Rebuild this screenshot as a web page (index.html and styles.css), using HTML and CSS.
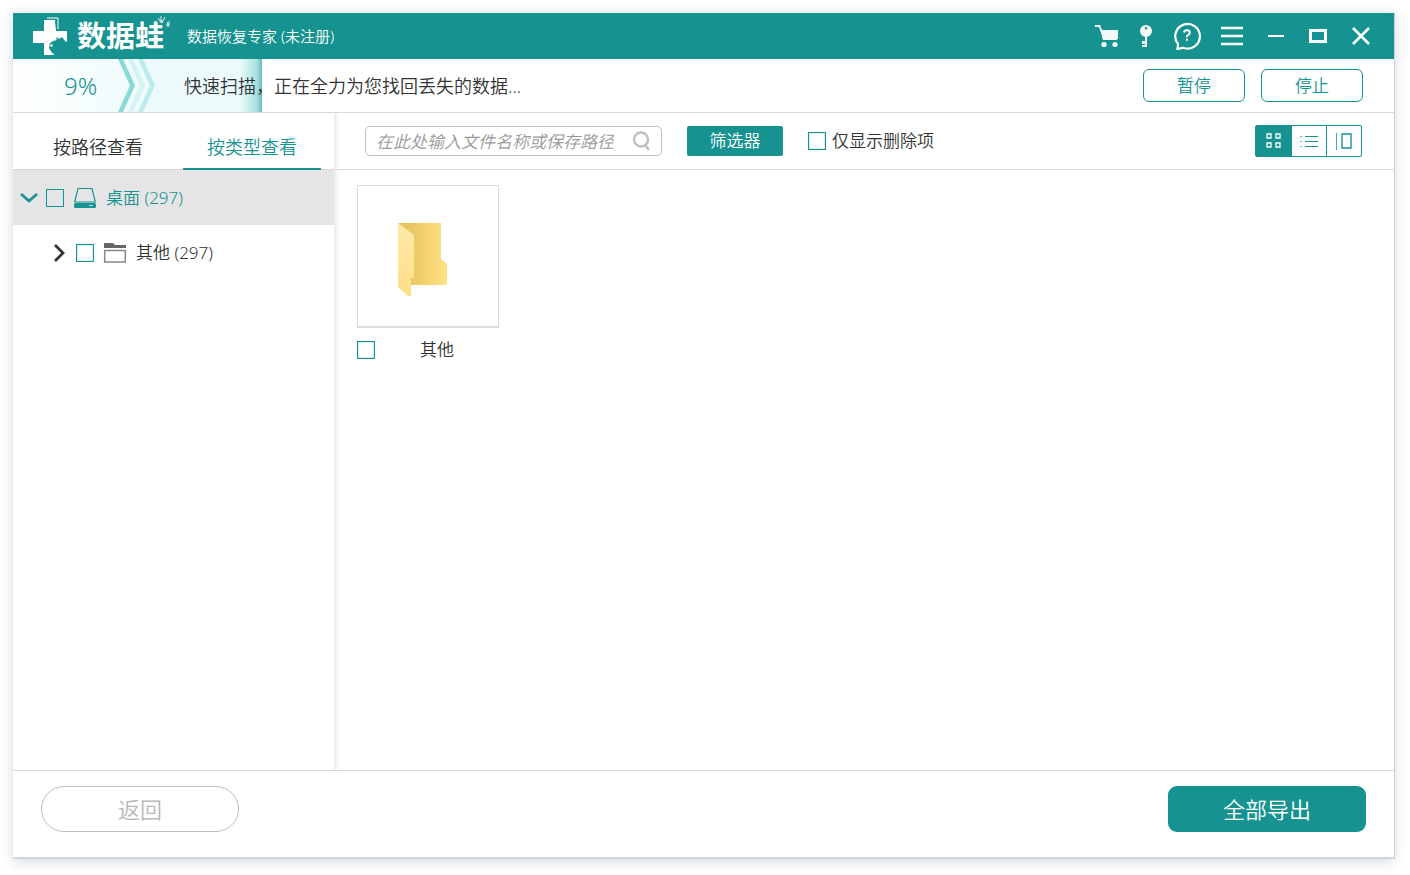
FILE: index.html
```html
<!DOCTYPE html>
<html lang="zh-CN">
<head>
    <meta charset="UTF-8">
    <title>数据恢复专家</title>
    <link rel="stylesheet" href="styles.css">
</head>
<body>
    <div class="window">
        <!-- title bar -->
        <header class="titlebar">
            <svg class="logo-mark" width="36" height="38" viewBox="0 0 36 38">
                <path d="M14 1h11v11" fill="none" stroke="#fff" stroke-width="1"/>
                <path d="M13 3h9v2l1 8v1h11v11l-2-1-3-4-3 2-2-2-2 3-5 3-1 5 3 5 2 1v1H11V26H0V14h11V3z" fill="#fff"/>
                <path d="M17 28l2-1 1 2-2 1zM21 23l2-2 1 1-2 2z" fill="#fff"/>
            </svg>
            <span class="logo-text">数据蛙
                <svg class="logo-paw" width="14" height="13" viewBox="0 0 14 13" fill="#b9dfde">
                    <path d="M1 3l2 3M4 1v5M8 2L6 6M10 7l1 2M12 6v3" fill="none" stroke="#b9dfde" stroke-width="1.200"/>
                    <circle cx="4.500" cy="6.500" r="1.800"/><circle cx="11" cy="10" r="1.800"/>
                </svg>
            </span>
            <span class="app-name">数据恢复专家 (未注册)</span>
            <div class="title-tools">
                <button type="button" aria-label="购买">
                    <svg width="24" height="24" viewBox="0 0 24 24" fill="#f4f8f8">
                        <path d="M0 1h5l2 5h16v9H8L4 3H0z"/>
                        <path d="M7 13h15v3H8z"/>
                        <circle cx="9" cy="20.500" r="2.600"/><circle cx="20" cy="20.500" r="2.600"/>
                    </svg>
                </button>
                <button type="button" aria-label="注册">
                    <svg width="14" height="24" viewBox="0 0 14 24" fill="#f4f8f8">
                        <path fill-rule="evenodd" d="M7 1a6 6 0 1 1 0 12A6 6 0 0 1 7 1zm0 2a1.300 1.300 0 1 0 0 2.600A1.300 1.300 0 0 0 7 3z"/>
                        <path d="M6 12h2v11H3v-2h3v-1H3v-3h3z"/>
                    </svg>
                </button>
                <button type="button" aria-label="帮助">
                    <svg width="28" height="28" viewBox="0 0 28 28" fill="none" stroke="#fff">
                        <path d="M5 22A12.300 12.300 0 1 1 10 25.700L4.500 27z" stroke-width="2.200"/>
                        <path d="M11 10.500q.3-2.200 3-2.200 2.800 0 2.800 2.300 0 1.600-1.600 2.300-1.400.7-1.400 2.300" stroke-width="2"/>
                        <path d="M13 16.800h2v2h-2z" fill="#fff" stroke="none"/>
                    </svg>
                </button>
            </div>
            <div class="window-tools">
                <button type="button" aria-label="菜单">
                    <svg width="22" height="20" viewBox="0 0 22 20" stroke="#fff" stroke-width="2.400"><path d="M0 2h22M0 10h22M0 18h22"/></svg>
                </button>
                <button type="button" aria-label="最小化">
                    <svg width="16" height="20" viewBox="0 0 16 20" stroke="#fff" stroke-width="2"><path d="M0 10h16"/></svg>
                </button>
                <button type="button" aria-label="最大化">
                    <svg width="18" height="14" viewBox="0 0 18 14" fill="none" stroke="#fff" stroke-width="3"><path d="M1.500 1.500h15v11h-15z"/></svg>
                </button>
                <button type="button" aria-label="关闭">
                    <svg width="18" height="18" viewBox="0 0 18 18" stroke="#fff" stroke-width="2.600"><path d="M1 1l16 16M17 1L1 17"/></svg>
                </button>
            </div>
        </header>

        <!-- scan progress -->
        <section class="progress">
            <div class="progress-fill" style="width: 18%"></div>
            <span class="percent">9%</span>
            <svg class="chevrons" width="38" height="53" viewBox="0 0 38 53">
                <path d="M0 0h5l12 26.500L5 53H0l12-26.500z" fill="#8adad8"/>
                <path d="M10 0h5l12 26.500L15 53h-5l12-26.500z" fill="#d4f3f3"/>
                <path d="M20 0h5l12 26.500L25 53h-5l12-26.500z" fill="#bcebeb"/>
            </svg>
            <span class="status">快速扫描，正在全力为您找回丢失的数据...</span>
            <button type="button" class="outline-btn">暂停</button>
            <button type="button" class="outline-btn">停止</button>
        </section>

        <div class="content">
            <aside class="sidebar">
                <nav class="tabs">
                    <button type="button" class="tab">按路径查看</button>
                    <button type="button" class="tab active">按类型查看</button>
                </nav>
                <div class="tree-row selected">
                    <svg class="arrow" width="18" height="18" viewBox="0 0 18 18" fill="none" stroke="#169390" stroke-width="2.800"><path d="M1 5l8 7 8-7"/></svg>
                    <input type="checkbox" id="desktop">
                    <svg class="tree-icon" width="24" height="22" viewBox="0 0 24 22">
                        <path d="M5 1.500h14L22.300 15H1.700z" fill="none" stroke="#169390" stroke-width="1.200"/>
                        <rect x="1" y="16" width="22" height="5" rx="1.500" fill="#169390"/>
                        <path d="M16 18.500h4" stroke="#cfe8e7" stroke-width="1"/>
                    </svg>
                    <label for="desktop">桌面 (297)</label>
                </div>
                <div class="tree-row child">
                    <svg class="arrow" width="18" height="18" viewBox="0 0 18 18" fill="none" stroke="#333" stroke-width="2.800"><path d="M5 1l8 8-8 8"/></svg>
                    <input type="checkbox" id="other">
                    <svg class="tree-icon" width="24" height="22" viewBox="0 0 24 22">
                        <path d="M1 1h9l2 2h11v3H1z" fill="#666"/>
                        <path d="M1.700 8.500h20.600v11.500H1.700z" fill="none" stroke="#888" stroke-width="1.500"/>
                    </svg>
                    <label for="other">其他 (297)</label>
                </div>
            </aside>

            <main class="main">
                <div class="toolbar">
                    <div class="search">
                        <input type="text" placeholder="在此处输入文件名称或保存路径" aria-label="搜索">
                        <svg width="20" height="20" viewBox="0 0 20 20" fill="none" stroke="#c0c0c0" stroke-width="2.500"><circle cx="9" cy="8.500" r="7"/><path d="M13 14l4 5"/></svg>
                    </div>
                    <button type="button" class="filter-btn">筛选器</button>
                    <input type="checkbox" id="deleted">
                    <label class="deleted-label" for="deleted">仅显示删除项</label>
                    <div class="views">
                        <button type="button" class="view active" aria-label="图标">
                            <svg width="16" height="16" viewBox="0 0 16 16" fill="none" stroke="#fff" stroke-width="1.300"><path d="M1 1h4v4H1zM10 1h4v4h-4zM1 10h4v4H1zM10 10h4v4h-4z"/></svg>
                        </button>
                        <button type="button" class="view" aria-label="列表">
                            <svg width="18" height="14" viewBox="0 0 18 14" stroke="#169390"><path d="M5 2.500h13M5 7.500h13M5 12.500h13"/><path d="M0 2.500h2M0 7.500h2M0 12.500h2" stroke-opacity=".6"/></svg>
                        </button>
                        <button type="button" class="view" aria-label="预览">
                            <svg width="18" height="18" viewBox="0 0 18 18" fill="none" stroke="#169390"><path d="M1.500 1v17" stroke-opacity=".8"/><path d="M7 2h9v14H7z" stroke-width="1.400"/></svg>
                        </button>
                    </div>
                </div>

                <div class="files">
                    <div class="file">
                        <div class="thumb">
                            <svg width="52" height="76" viewBox="0 0 52 76">
                                <defs>
                                    <linearGradient id="back" x1="0" y1="0" x2="1" y2="0">
                                        <stop offset=".2" stop-color="#e9c562"/>
                                        <stop offset=".6" stop-color="#f4d372"/>
                                        <stop offset="1" stop-color="#ffe184"/>
                                    </linearGradient>
                                    <linearGradient id="front" x1="0" y1="0" x2="0" y2="1">
                                        <stop offset="0" stop-color="#ffeaab"/>
                                        <stop offset="1" stop-color="#ffdf86"/>
                                    </linearGradient>
                                </defs>
                                <path d="M0 1h43v36l6 5v21H12z" fill="url(#back)"/>
                                <path d="M0 1l16 12v43h-3v18h-3L0 65z" fill="url(#front)"/>
                            </svg>
                        </div>
                        <div class="caption">
                            <input type="checkbox" id="file-other">
                            <label for="file-other">其他</label>
                        </div>
                    </div>
                </div>
            </main>
        </div>

        <footer class="footer">
            <button type="button" class="back-btn">返回</button>
            <button type="button" class="export-btn">全部导出</button>
        </footer>
    </div>
</body>
</html>
```
FILE: styles.css
```css
* {
    box-sizing: border-box;
}
body {
    margin: 0;
    padding: 13px 16px 16px 13px;
    height: 100vh;
    background-color: #fff;
    color: #333;
    font-family: "Noto Sans", "Noto Sans CJK SC", sans-serif;
    font-size: 17px;
    font-weight: 350;
    line-height: 24px;
}
button,
input {
    font: inherit;
    color: inherit;
}
button {
    padding: 0;
    border: 0;
    background: none;
    cursor: pointer;
}
svg {
    display: block;
    flex-shrink: 0;
}
input[type="checkbox"] {
    appearance: none;
    flex-shrink: 0;
    width: 18px;
    height: 18px;
    margin: 0;
    border: 1px solid #169390;
    box-shadow: inset 0 0 0 1px #d5eeed;
}
input[type="checkbox"]:checked {
    background-color: #169390;
}
.window {
    display: flex;
    flex-direction: column;
    height: 100%;
    border-bottom: 2px solid #d0d7de;
    box-shadow: 1px 0 0 #c9ced8, 0 2px 12px rgba(60, 75, 105, 0.22);
}

/* title bar */
.titlebar {
    display: flex;
    align-items: center;
    flex-shrink: 0;
    height: 46px;
    padding: 0 24px 0 20px;
    background-color: #169390;
    color: #fff;
}
.logo-text {
    position: relative;
    margin-left: 8px;
    width: 96px;
    font-size: 29px;
    font-weight: 700;
    line-height: 46px;
    white-space: nowrap;
}
.logo-paw {
    position: absolute;
    top: 2px;
    right: 2px;
}
.app-name {
    margin-left: 14px;
    font-size: 15px;
    white-space: nowrap;
}
.title-tools,
.window-tools {
    display: flex;
    align-items: center;
}
.title-tools {
    gap: 20px;
    margin-left: auto;
}
.window-tools {
    gap: 25px;
    margin-left: 20px;
}

/* progress */
.progress {
    position: relative;
    display: flex;
    align-items: center;
    flex-shrink: 0;
    height: 54px;
    padding-right: 31px;
    border-bottom: 1px solid #d8d8d8;
}
.progress-fill {
    position: absolute;
    top: 0;
    bottom: 0;
    left: 0;
    background: linear-gradient(to left, #68bcba, #a3e0de 5px, #ecfafb 22px, #ecfafb 100px, #fff);
}
.percent {
    position: relative;
    width: 105px;
    padding-left: 51px;
    color: #169390;
    font-size: 24px;
}
.chevrons {
    position: relative;
}
.status {
    position: relative;
    margin: 0 auto 0 28px;
    font-size: 18px;
}
.outline-btn {
    width: 102px;
    height: 33px;
    margin-left: 16px;
    border: 1px solid #169390;
    border-radius: 6px;
    color: #169390;
}

/* sidebar */
.content {
    display: flex;
    flex: 1;
    min-height: 0;
}
.sidebar {
    flex-shrink: 0;
    width: 321px;
    box-shadow: 3px 0 3px #e9ecf1;
    clip-path: inset(0 -5px 0 0);
}
.tabs {
    display: flex;
    gap: 16px;
    height: 57px;
    padding-left: 16px;
    border-bottom: 1px solid #d8d8d8;
}
.tab {
    height: 57px;
    padding: 12px 24px 0;
    border-bottom: 2px solid transparent;
    font-size: 18px;
}
.tab.active {
    border-color: #169390;
    color: #169390;
}
.tree-row {
    display: flex;
    align-items: center;
    height: 55px;
    padding-left: 7px;
}
.tree-row.child {
    padding-left: 37px;
}
.tree-row.selected {
    background-color: #e5e5e5;
    color: #169390;
}
.arrow {
    margin-right: 8px;
}
.tree-icon {
    margin: 0 9px;
}

/* file area */
.main {
    flex: 1;
    min-width: 0;
}
.toolbar {
    display: flex;
    align-items: center;
    height: 57px;
    padding: 0 32px 0 31px;
    border-bottom: 1px solid #d8d8d8;
}
.search {
    display: flex;
    align-items: center;
    width: 297px;
    height: 30px;
    padding: 0 9px 0 10px;
    border: 1px solid #c0c0c0;
    border-radius: 5px;
}
.search input {
    flex: 1;
    min-width: 0;
    height: 28px;
    margin-right: 18px;
    padding: 0;
    border: 0;
    outline: 0;
    background: none;
    font-style: italic;
}
.search input::placeholder {
    color: #999;
}
.filter-btn {
    width: 96px;
    height: 30px;
    margin: 0 25px;
    border-radius: 2px;
    background-color: #169390;
    color: #fff;
}
.deleted-label {
    margin-left: 6px;
}
.views {
    display: flex;
    margin-left: auto;
    border: 1px solid #169390;
    border-radius: 2px;
}
.view {
    display: flex;
    align-items: center;
    justify-content: center;
    width: 35px;
    height: 30px;
}
.view + .view {
    border-left: 1px solid #169390;
}
.view.active {
    background-color: #169390;
}
.files {
    display: flex;
    flex-wrap: wrap;
    gap: 24px;
    padding: 15px 23px;
}
.file {
    width: 142px;
}
.thumb {
    height: 143px;
    padding: 36px 0 0 40px;
    border: 1px solid #dcdcdc;
    border-bottom-width: 2px;
}
.caption {
    display: flex;
    align-items: center;
    margin-top: 10px;
}
.caption label {
    flex: 1;
    text-align: center;
}

/* footer */
.footer {
    display: flex;
    justify-content: space-between;
    flex-shrink: 0;
    height: 87px;
    padding: 15px 28px 0;
    border-top: 1px solid #d8d8d8;
    font-size: 22px;
}
.back-btn,
.export-btn {
    width: 198px;
    height: 46px;
}
.back-btn {
    border: 1px solid #c0c0c0;
    border-radius: 23px;
    color: #b8b8b8;
}
.export-btn {
    border-radius: 9px;
    background-color: #169390;
    color: #fff;
}
```
